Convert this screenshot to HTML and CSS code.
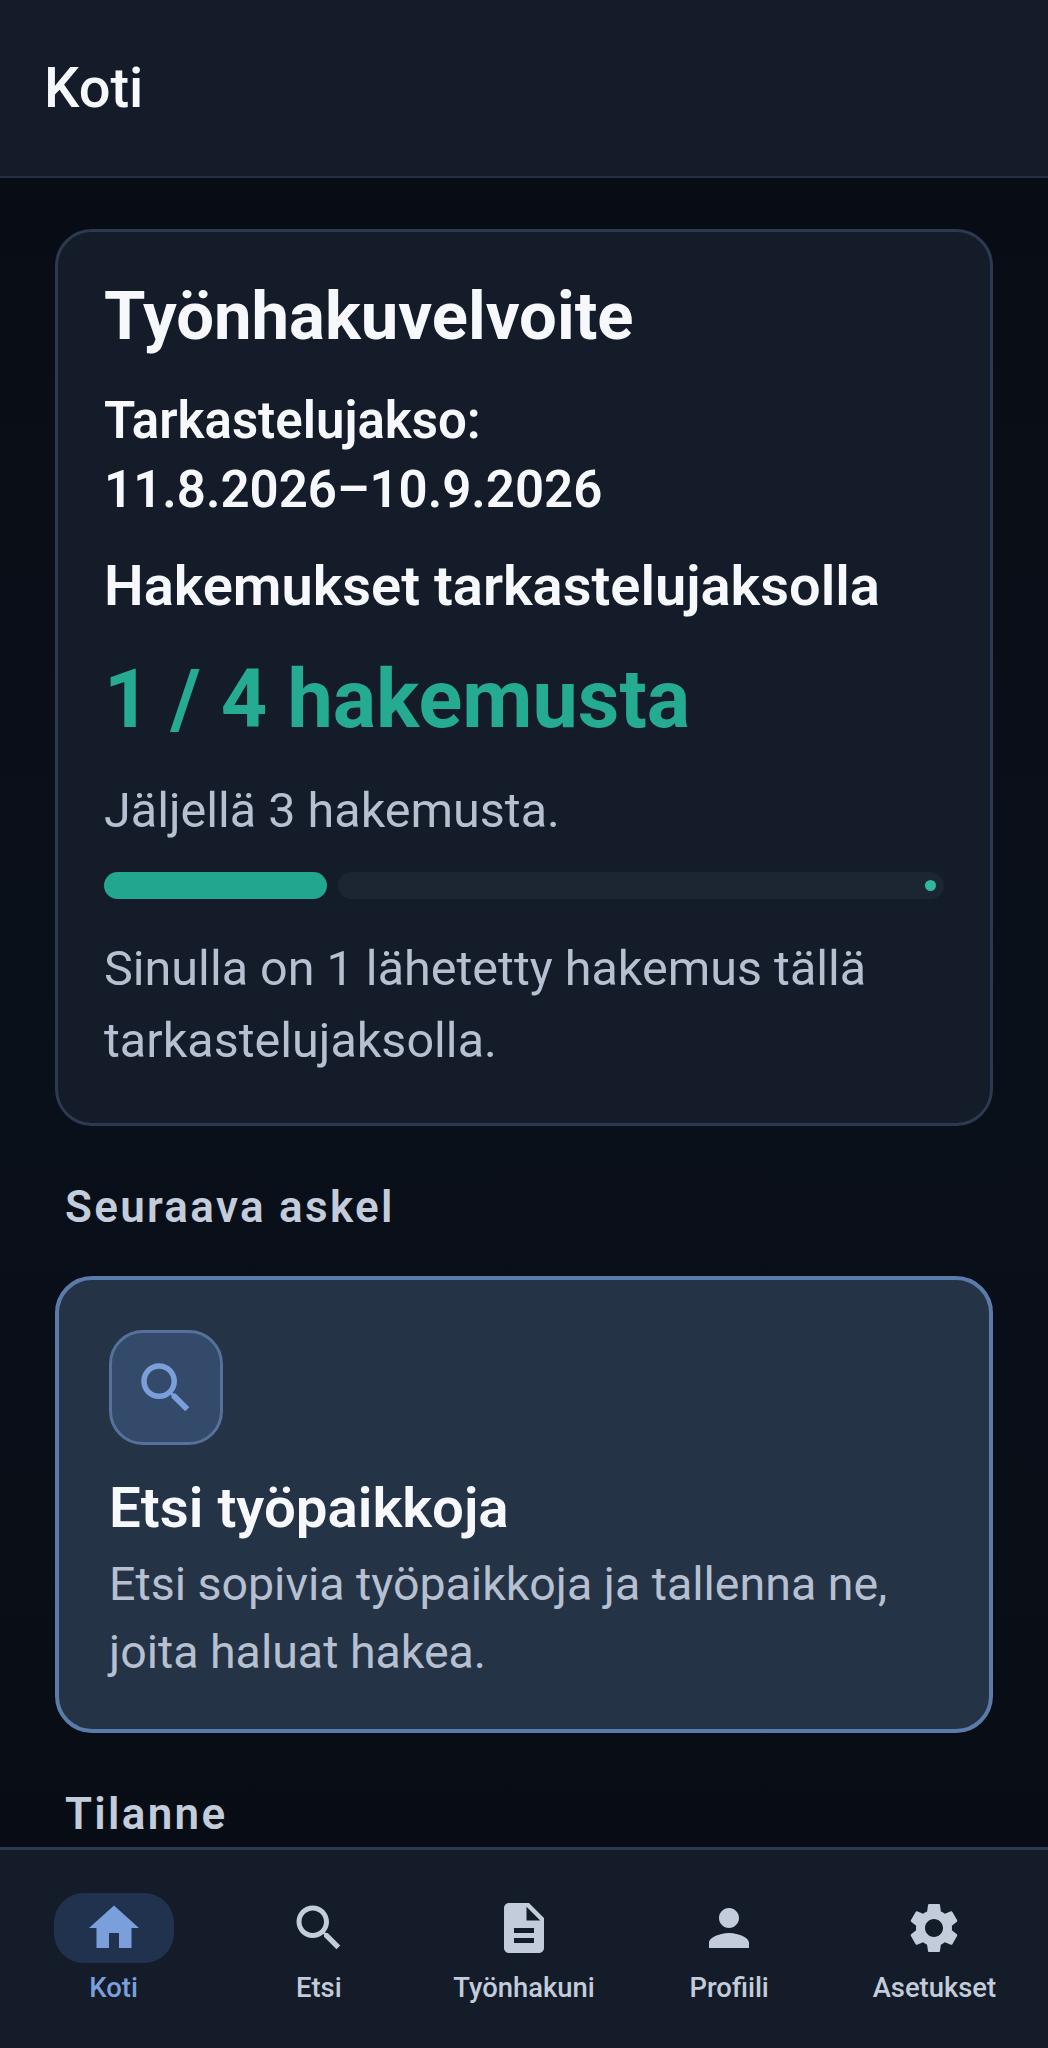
FILE: index.html
```html
<!DOCTYPE html>
<html lang="fi">
<head>
<meta charset="utf-8">
<title>Koti</title>
<link rel="stylesheet" href="styles.css">
</head>
<body>
<div class="app">
  <header class="topbar"><h1 class="topbar-title">Koti</h1></header>
  <main class="content">
    <section class="card">
      <h2 class="card-title">Työnhakuvelvoite</h2>
      <p class="period">Tarkastelujakso:<br>11.8.2026–10.9.2026</p>
      <h3 class="count-label">Hakemukset tarkastelujaksolla</h3>
      <p class="count">1 / 4 hakemusta</p>
      <p class="remaining">Jäljellä 3 hakemusta.</p>
      <div class="progress">
        <div class="progress-fill"></div>
        <div class="progress-track"><span class="progress-stop"></span></div>
      </div>
      <p class="summary">Sinulla on 1 lähetetty hakemus tällä tarkastelujaksolla.</p>
    </section>
    <h2 class="section-title">Seuraava askel</h2>
    <section class="action">
      <div class="action-icon">
        <svg class="icon-lg" viewBox="0 0 24 24"><path d="M15.5 14h-.79l-.28-.27C15.41 12.59 16 11.11 16 9.5 16 5.91 13.09 3 9.5 3S3 5.91 3 9.5 5.91 16 9.5 16c1.61 0 3.09-.59 4.23-1.57l.27.28v.79l5 4.99L20.49 19l-4.99-5zm-6 0C7.01 14 5 11.99 5 9.5S7.01 5 9.5 5 14 7.01 14 9.5 11.99 14 9.5 14z"/></svg>
      </div>
      <h3 class="action-title">Etsi työpaikkoja</h3>
      <p class="action-text">Etsi sopivia työpaikkoja ja tallenna ne, joita haluat hakea.</p>
    </section>
    <h2 class="section-title">Tilanne</h2>
  </main>
  <nav class="tabbar">
    <a class="tab tab-active">
      <span class="tab-pill"><svg class="icon" viewBox="0 0 24 24"><path d="M10 20v-6h4v6h5v-8h3L12 3 2 12h3v8z"/></svg></span>
      <span class="tab-label">Koti</span>
    </a>
    <a class="tab">
      <span class="tab-pill"><svg class="icon" viewBox="0 0 24 24"><path d="M15.5 14h-.79l-.28-.27C15.41 12.59 16 11.11 16 9.5 16 5.91 13.09 3 9.5 3S3 5.91 3 9.5 5.91 16 9.5 16c1.61 0 3.09-.59 4.23-1.57l.27.28v.79l5 4.99L20.49 19l-4.99-5zm-6 0C7.01 14 5 11.99 5 9.5S7.01 5 9.5 5 14 7.01 14 9.5 11.99 14 9.5 14z"/></svg></span>
      <span class="tab-label">Etsi</span>
    </a>
    <a class="tab">
      <span class="tab-pill"><svg class="icon" viewBox="0 0 24 24"><path d="M14 2H6c-1.1 0-1.99.9-1.99 2L4 20c0 1.1.89 2 1.99 2H18c1.1 0 2-.9 2-2V8l-6-6zm2 16H8v-2h8v2zm0-4H8v-2h8v2zm-3-5V3.5L18.5 9H13z"/></svg></span>
      <span class="tab-label">Työnhakuni</span>
    </a>
    <a class="tab">
      <span class="tab-pill"><svg class="icon" viewBox="0 0 24 24"><path d="M12 12c2.21 0 4-1.79 4-4s-1.79-4-4-4-4 1.79-4 4 1.79 4 4 4zm0 2c-2.67 0-8 1.34-8 4v2h16v-2c0-2.66-5.33-4-8-4z"/></svg></span>
      <span class="tab-label">Profiili</span>
    </a>
    <a class="tab">
      <span class="tab-pill"><svg class="icon" viewBox="0 0 24 24"><path d="M19.14 12.94c.04-.3.06-.61.06-.94 0-.32-.02-.64-.07-.94l2.03-1.58c.18-.14.23-.41.12-.61l-1.92-3.32c-.12-.22-.37-.29-.59-.22l-2.39.96c-.5-.38-1.03-.7-1.62-.94l-.36-2.54c-.04-.24-.24-.41-.48-.41h-3.84c-.24 0-.43.17-.47.41l-.36 2.54c-.59.24-1.13.57-1.62.94l-2.39-.96c-.22-.08-.47 0-.59.22L2.74 8.87c-.12.21-.08.47.12.61l2.03 1.58c-.05.3-.09.63-.09.94s.02.64.07.94l-2.03 1.58c-.18.14-.23.41-.12.61l1.92 3.32c.12.22.37.29.59.22l2.39-.96c.5.38 1.03.7 1.62.94l.36 2.54c.05.24.24.41.48.41h3.84c.24 0 .44-.17.47-.41l.36-2.54c.59-.24 1.13-.56 1.62-.94l2.39.96c.22.08.47 0 .59-.22l1.92-3.32c.12-.22.07-.47-.12-.61l-2.01-1.58zM12 15.6c-1.98 0-3.6-1.62-3.6-3.6s1.62-3.6 3.6-3.6 3.6 1.62 3.6 3.6-1.62 3.6-3.6 3.6z"/></svg></span>
      <span class="tab-label">Asetukset</span>
    </a>
  </nav>
</div>
</body>
</html>
```
FILE: styles.css
```css
* { box-sizing: border-box; }
html, body { margin: 0; padding: 0; }
body { background: #080d16; font-family: Roboto, "Liberation Sans", sans-serif; }
h1, h2, h3, p { margin: 0; }

.app { width: 1048px; height: 2048px; display: flex; flex-direction: column; overflow: hidden; background: linear-gradient(#080c14, #0a101a 50%, #080c14); }

.topbar { flex: none; height: 178px; padding: 0 44px; display: flex; align-items: center; background: #141c2a; border-bottom: 2px solid #242f42; }
.topbar-title { font-size: 56px; line-height: 60px; font-weight: 500; color: #f6f8fc; }

.content { flex: 1; min-height: 0; overflow: hidden; padding: 51px 55px 0; }

.card { background: #141c2a; border: 3px solid #2c3a50; border-radius: 37px; padding: 48px 46px 0; height: 897px; }
.card-title { font-size: 67px; line-height: 72px; font-weight: 700; color: #f6f8fc; }
.period { margin-top: 34px; font-size: 51px; line-height: 69px; font-weight: 600; color: #f6f8fc; }
.count-label { margin-top: 29px; font-size: 56px; line-height: 66px; font-weight: 600; color: #f6f8fc; }
.count { margin-top: 33px; font-size: 81px; line-height: 96px; font-weight: 700; color: #26ab93; }
.remaining { margin-top: 33px; font-size: 48.5px; line-height: 60px; color: #b6c0d0; }

.progress { margin-top: 31px; display: flex; gap: 11px; height: 27px; }
.progress-fill { width: 223px; background: #22a690; border-radius: 14px; }
.progress-track { flex: 1; display: flex; align-items: center; justify-content: flex-end; padding-right: 8px; background: #1c2633; border-radius: 14px; }
.progress-stop { width: 11px; height: 11px; border-radius: 50%; background: #2eb89f; }

.summary { margin-top: 34px; font-size: 48.5px; line-height: 72px; color: #b6c0d0; }

.section-title { margin: 56px 0 0 10px; font-size: 44px; line-height: 50px; font-weight: 600; letter-spacing: 2.3px; color: #c3ccda; }

.action { margin-top: 44px; height: 457px; background: #253347; border: 4px solid #5b7cab; border-radius: 37px; padding: 50px 50px 0; }
.action-icon { width: 114px; height: 115px; display: flex; align-items: center; justify-content: center; background: #344a6b; border: 3px solid #56719b; border-radius: 34px; }
.icon-lg { width: 66px; height: 66px; fill: #7a9fdb; }
.action-title { margin-top: 30px; font-size: 56.4px; line-height: 66px; font-weight: 600; color: #f6f8fc; }
.action-text { margin-top: 9px; font-size: 46.5px; line-height: 68px; color: #b6c0d0; }

.tabbar { flex: none; height: 201px; padding: 0 11px; display: grid; grid-template-columns: repeat(5, 1fr); background: #141c2a; border-top: 3px solid #2c3a50; }
.tab { display: flex; flex-direction: column; align-items: center; padding-top: 43px; color: #c3ccda; }
.tab-pill { width: 120px; height: 70px; display: flex; align-items: center; justify-content: center; border-radius: 30px; }
.tab-active { color: #7a9fdb; }
.tab-active .tab-pill { background: #20324e; }
.icon { width: 60px; height: 60px; fill: currentColor; }
.tab-label { margin-top: 8px; font-size: 27.4px; line-height: 34px; font-weight: 500; white-space: nowrap; }
```
